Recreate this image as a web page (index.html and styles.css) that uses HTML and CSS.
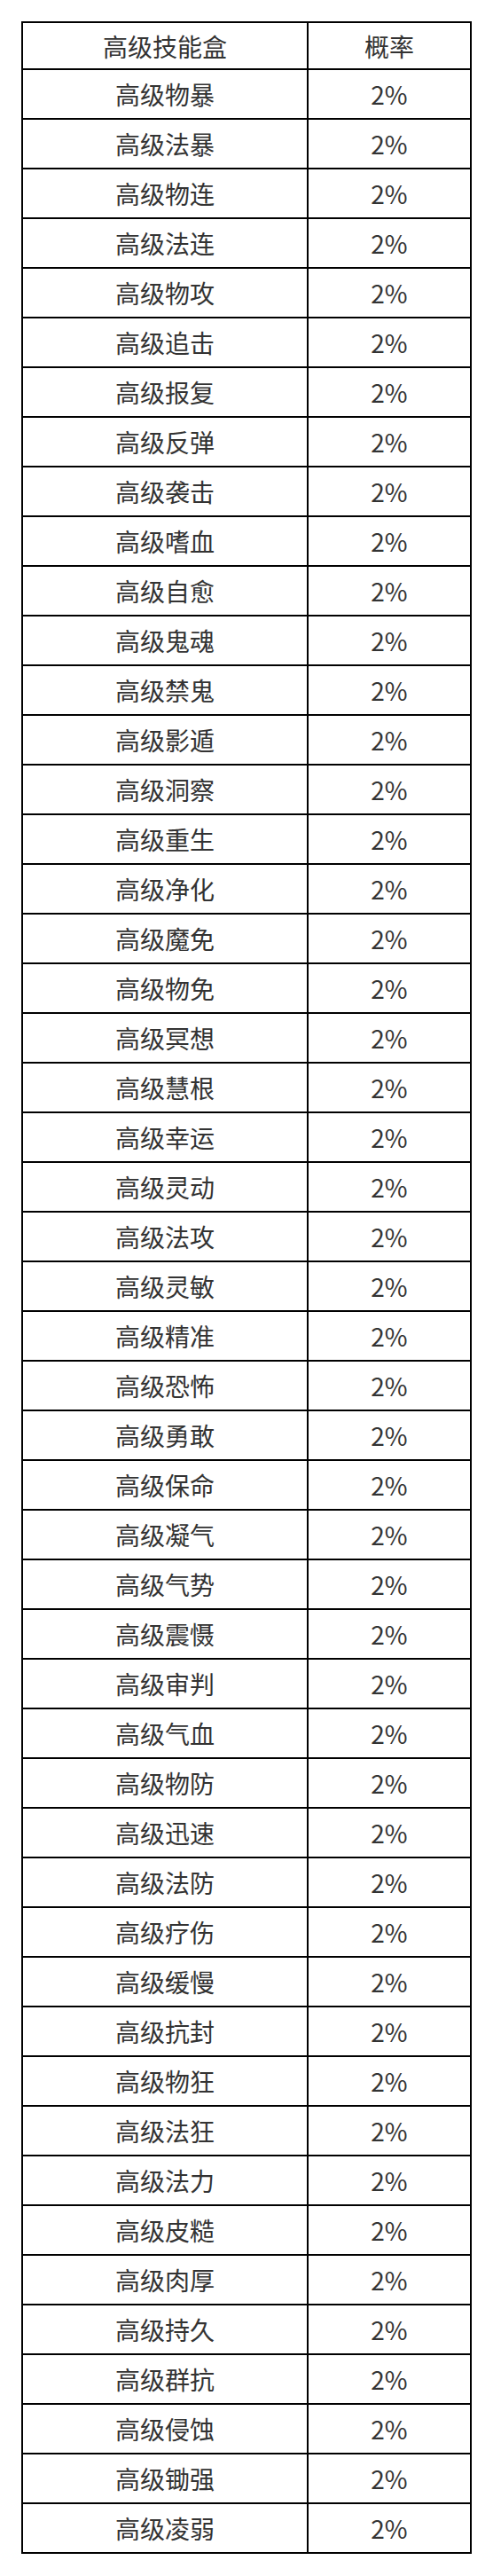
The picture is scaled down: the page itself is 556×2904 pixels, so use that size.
FILE: index.html
```html
<!DOCTYPE html>
<html lang="zh-CN">
<head>
<meta charset="utf-8">
<title>高级技能盒概率</title>
<link rel="stylesheet" href="styles.css">
</head>
<body>
<table class="prob-table">
  <thead>
    <tr><th class="col-name">高级技能盒</th><th class="col-rate">概率</th></tr>
  </thead>
  <tbody>
    <tr><td>高级物暴</td><td>2%</td></tr>
    <tr><td>高级法暴</td><td>2%</td></tr>
    <tr><td>高级物连</td><td>2%</td></tr>
    <tr><td>高级法连</td><td>2%</td></tr>
    <tr><td>高级物攻</td><td>2%</td></tr>
    <tr><td>高级追击</td><td>2%</td></tr>
    <tr><td>高级报复</td><td>2%</td></tr>
    <tr><td>高级反弹</td><td>2%</td></tr>
    <tr><td>高级袭击</td><td>2%</td></tr>
    <tr><td>高级嗜血</td><td>2%</td></tr>
    <tr><td>高级自愈</td><td>2%</td></tr>
    <tr><td>高级鬼魂</td><td>2%</td></tr>
    <tr><td>高级禁鬼</td><td>2%</td></tr>
    <tr><td>高级影遁</td><td>2%</td></tr>
    <tr><td>高级洞察</td><td>2%</td></tr>
    <tr><td>高级重生</td><td>2%</td></tr>
    <tr><td>高级净化</td><td>2%</td></tr>
    <tr><td>高级魔免</td><td>2%</td></tr>
    <tr><td>高级物免</td><td>2%</td></tr>
    <tr><td>高级冥想</td><td>2%</td></tr>
    <tr><td>高级慧根</td><td>2%</td></tr>
    <tr><td>高级幸运</td><td>2%</td></tr>
    <tr><td>高级灵动</td><td>2%</td></tr>
    <tr><td>高级法攻</td><td>2%</td></tr>
    <tr><td>高级灵敏</td><td>2%</td></tr>
    <tr><td>高级精准</td><td>2%</td></tr>
    <tr><td>高级恐怖</td><td>2%</td></tr>
    <tr><td>高级勇敢</td><td>2%</td></tr>
    <tr><td>高级保命</td><td>2%</td></tr>
    <tr><td>高级凝气</td><td>2%</td></tr>
    <tr><td>高级气势</td><td>2%</td></tr>
    <tr><td>高级震慑</td><td>2%</td></tr>
    <tr><td>高级审判</td><td>2%</td></tr>
    <tr><td>高级气血</td><td>2%</td></tr>
    <tr><td>高级物防</td><td>2%</td></tr>
    <tr><td>高级迅速</td><td>2%</td></tr>
    <tr><td>高级法防</td><td>2%</td></tr>
    <tr><td>高级疗伤</td><td>2%</td></tr>
    <tr><td>高级缓慢</td><td>2%</td></tr>
    <tr><td>高级抗封</td><td>2%</td></tr>
    <tr><td>高级物狂</td><td>2%</td></tr>
    <tr><td>高级法狂</td><td>2%</td></tr>
    <tr><td>高级法力</td><td>2%</td></tr>
    <tr><td>高级皮糙</td><td>2%</td></tr>
    <tr><td>高级肉厚</td><td>2%</td></tr>
    <tr><td>高级持久</td><td>2%</td></tr>
    <tr><td>高级群抗</td><td>2%</td></tr>
    <tr><td>高级侵蚀</td><td>2%</td></tr>
    <tr><td>高级锄强</td><td>2%</td></tr>
    <tr><td>高级凌弱</td><td>2%</td></tr>
  </tbody>
</table>
</body>
</html>
```

FILE: styles.css
```css
html, body {
  margin: 0;
  padding: 0;
  background: #ffffff;
}

body {
  padding: 24px;
  font-family: "Noto Sans CJK SC", "Noto Sans", sans-serif;
  color: #333333;
}

.prob-table {
  width: 508px;
  border-collapse: separate;
  border-spacing: 0;
  border-top: 2px solid #000000;
  border-left: 2px solid #000000;
  table-layout: fixed;
}

.prob-table th,
.prob-table td {
  padding: 0;
  border-right: 2px solid #000000;
  border-bottom: 2px solid #000000;
  text-align: center;
  vertical-align: middle;
  font-size: 28px;
  font-weight: normal;
  line-height: 1;
  box-sizing: border-box;
}

.prob-table th {
  height: 53px;
}

.prob-table td {
  height: 56px;
}

.prob-table .col-name {
  width: 322px;
}

.prob-table .col-rate {
  width: 184px;
}
```
